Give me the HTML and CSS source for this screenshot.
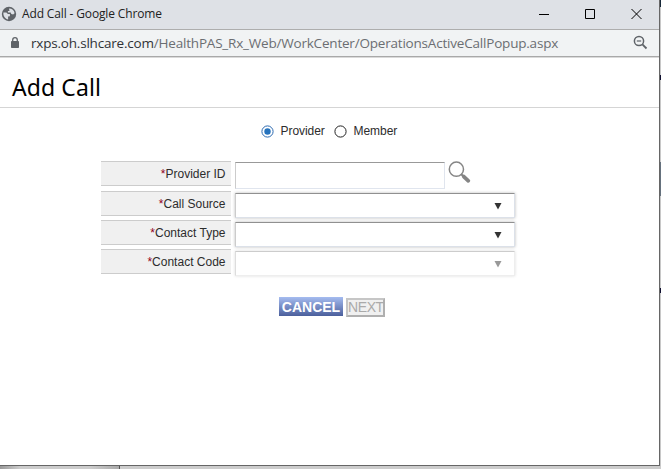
FILE: index.html
```html
<!DOCTYPE html>
<html lang="en">
<head>
<meta charset="utf-8">
<title>Add Call</title>
<link rel="stylesheet" href="styles.css">
</head>
<body>
<div class="desktop">
  <div class="window">
    <header class="titlebar">
      <svg class="globe" width="16" height="16" viewBox="0 0 16 16"><circle cx="8" cy="8" r="7.200" fill="#5f6368"/><path d="M2.400 6.500h3l1.500 1.500h2v2.300l-1.800.3v2.800C4.500 13 2 10.500 2.400 6.500zM8 2.600c3 0 5.300 2 5.600 4.600l-1.500 1.400-1.800-.6-.6-1.500H6.900V4.900h1.600z" fill="#dee1e6"/></svg>
      <span class="window-title">Add Call - Google Chrome</span>
      <svg class="controls" width="103" height="12" viewBox="0 0 103 12" fill="none" stroke="#000"><path d="M0 6.500h10M46.500 1.500h9v9h-9zM92.500 1l10 10M102.500 1l-10 10"/></svg>
    </header>
    <div class="addressbar">
      <svg class="lock" width="10" height="12" viewBox="0 0 10 12"><path d="M2.700 5V3a2.300 2.300 0 0 1 4.600 0V5" fill="none" stroke="#5f6368" stroke-width="1.300"/><rect x="1" y="4" width="8" height="7" rx=".8" fill="#5f6368"/></svg>
      <span class="url"><span class="host">rxps.oh.slhcare.com</span>/HealthPAS_Rx_Web/WorkCenter/OperationsActiveCallPopup.aspx</span>
      <svg class="zoom" width="15" height="15" viewBox="0 0 15 15" fill="none" stroke="#5f6368"><circle cx="6" cy="6" r="4.600" stroke-width="1.500"/><path d="M3.800 6h4.400" stroke-width="1.200"/><path d="M9.400 9.400l4.100 4.100" stroke-width="1.800"/></svg>
    </div>
    <main class="page">
      <h1>Add Call</h1>
      <div class="radios">
        <svg width="13" height="13" viewBox="0 0 13 13"><circle cx="6.500" cy="6.500" r="5.600" fill="#fff" stroke="#2b69b0"/><circle cx="6.500" cy="6.500" r="3.200" fill="#2673bd"/></svg>
        <span class="provider">Provider</span>
        <svg width="13" height="13" viewBox="0 0 13 13"><circle cx="6.500" cy="6.500" r="5.600" fill="#fff" stroke="#222"/></svg>
        <span>Member</span>
      </div>
      <div class="form">
        <div class="row first">
          <div class="label"><b>*</b>Provider ID</div>
          <div class="input"></div>
          <svg class="search" width="23" height="23" viewBox="0 0 23 23" fill="none" stroke="#858585"><circle cx="8.400" cy="8.200" r="7.100" stroke-width="1.500"/><path d="M13.300 13.300l3 3" stroke-width="2"/><path d="M15.800 15.600l4.500 4.200" stroke-width="3.800" stroke-linecap="round"/></svg>
        </div>
        <div class="row">
          <div class="label"><b>*</b>Call Source</div>
          <div class="select"><svg width="8" height="7" viewBox="0 0 8 7"><path d="M.5 0h7L4 6.500z"/></svg></div>
        </div>
        <div class="row">
          <div class="label"><b>*</b>Contact Type</div>
          <div class="select"><svg width="8" height="7" viewBox="0 0 8 7"><path d="M.5 0h7L4 6.500z"/></svg></div>
        </div>
        <div class="row">
          <div class="label"><b>*</b>Contact Code</div>
          <div class="select disabled"><svg width="8" height="7" viewBox="0 0 8 7"><path d="M.5 0h7L4 6.500z"/></svg></div>
        </div>
      </div>
      <div class="actions">
        <button class="cancel">CANCEL</button>
        <button class="next" disabled>NEXT</button>
      </div>
    </main>
  </div>
  <aside class="edge"><i class="corner"></i><i class="mark upper"></i><i class="panel"></i><i class="mark lower"></i></aside>
  <footer class="taskline"></footer>
</div>
</body>
</html>
```

FILE: styles.css
```css
* { box-sizing: border-box; }
body { margin: 0; overflow: hidden; font-family: "Liberation Sans", Arial, sans-serif; font-size: 12px; color: #2c2c2c; }
svg { display: block; flex: none; }
.desktop { display: grid; grid-template: 466px 3px / 660px 1px; width: 661px; height: 469px; background: #c8c8c8; }
.window { background: #fff; border-right: 1px solid #666; border-bottom: 1px solid #666; }
.titlebar { height: 30px; display: flex; align-items: center; padding: 0 17px 2px 1px; background: #dee1e6; border-bottom: 1px solid #adadad; }
.window-title { margin-left: 5px; font: 12px/18px "Open Sans", sans-serif; letter-spacing: -.14px; color: #222; white-space: nowrap; }
.controls { margin-left: auto; }
.addressbar { height: 28px; display: flex; align-items: center; padding: 0 11px 2px 10px; background: #f1f3f4; border-bottom: 1px solid #dadada; box-shadow: inset 0 -1px #a9a9a9; }
.url { margin-left: 11px; font: 13.5px/20px "Open Sans", sans-serif; color: #6b6e72; white-space: nowrap; letter-spacing: -.2px; }
.host { color: #303236; }
.zoom { margin-left: auto; }
h1 { margin: 0; height: 50px; padding: 13px 0 0 12px; border-bottom: 1px solid #d5d5d5; font: 23px/32px "Noto Sans", sans-serif; letter-spacing: .1px; color: #000; }
.radios { display: flex; align-items: center; height: 14px; margin: 16px 0 0 261px; }
.radios span { margin-left: 6.5px; letter-spacing: -.05px; }
.radios .provider { width: 46px; margin-right: 7.5px; }
.form { margin: 23px 0 0 101px; }
.row { display: flex; height: 29px; }
.row.first { height: 30px; }
.label { width: 130px; height: 25px; padding: 1px 5.5px 0 0; text-align: right; line-height: 23px; background: #f0f0f0; border: solid #ccc; border-width: 1px 0; }
.label b { font-weight: 400; color: #900020; }
.input { width: 210px; height: 27px; margin: 1px 0 0 4px; border: 1px solid #e0e5ee; border-top-color: #999; border-left-color: #ccc; }
.search { margin-left: 3px; }
.select { width: 280px; height: 25px; margin: 2px 0 0 4px; padding: 9px 12px 0 0; display: flex; justify-content: flex-end; border: 1px solid #dce1e9; border-top-color: #909090; border-left-color: #ccc; box-shadow: 0 0 3px #bbb; fill: #333; }
.disabled { border-color: #ccc #eee #eee #ddd; box-shadow: 0 0 3px #ddd; fill: #999; }
.actions { display: flex; gap: 3px; margin: 19px 0 0 279px; }
button { height: 19px; padding: 0; font: 14px/15px "Liberation Sans", Arial, sans-serif; border-radius: 0; white-space: nowrap; }
.cancel { width: 64px; padding-top: 1px; border: 0; font-weight: 700; color: #fff; background: linear-gradient(#a5bcf0, #4b5f9c); }
.next { width: 39px; margin-top: 1px; border: 2px solid; border-color: #c6c6c6 #afafaf #afafaf #c6c6c6; background: #f0f0f0; color: #aaa; letter-spacing: -.4px; }
.edge { display: flex; flex-direction: column; background: #c8c8c8; }
.edge i { display: block; flex: none; width: 1px; }
.corner { height: 7px; background: #172838; }
.mark { height: 5px; background: #101030; }
.upper { margin-top: 68px; }
.panel { height: 34px; margin-top: 82px; background: #65717d; }
.lower { margin-top: 92px; }
.taskline { grid-column: 1 / -1; background: linear-gradient(90deg, #999, #ccc 20px, #ccc 90px, #aaa 119px, #555 119px, #555 120px, #ccc 120px); }
```
